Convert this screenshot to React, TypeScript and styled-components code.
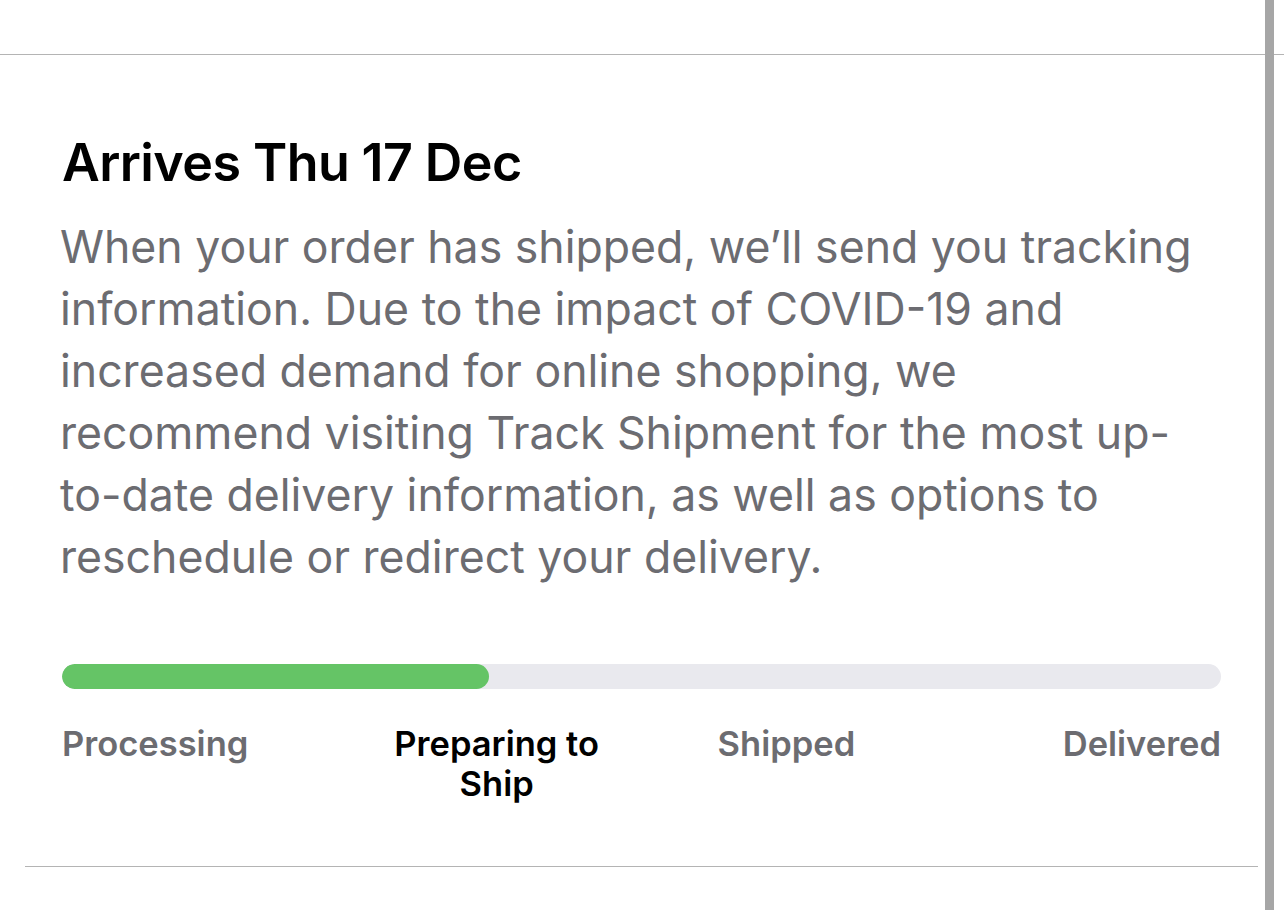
import React from 'react';
import styled, { createGlobalStyle } from 'styled-components';

const GlobalStyle = createGlobalStyle`
  html, body {
    margin: 0;
    padding: 0;
    background: #fff;
  }
  body {
    font-family: Inter, "Noto Sans", "Liberation Sans", sans-serif;
    -webkit-font-smoothing: antialiased;
  }
`;

const STEPS = [
  { label: 'Processing', align: 'left', active: false },
  { label: 'Preparing to Ship', align: 'center', active: true },
  { label: 'Shipped', align: 'center', active: false },
  { label: 'Delivered', align: 'right', active: false },
];

const PROGRESS = 36.8;

const Page = styled.div`
  position: relative;
  width: 1284px;
  height: 910px;
  overflow: hidden;
  background: #fff;
`;

const TopRule = styled.div`
  height: 54px;
  border-bottom: 1px solid #b4b4b4;
`;

const Section = styled.section`
  display: flex;
  flex-direction: column;
  padding: 0 63px 0 62px;
  width: 1159px;
`;

const Title = styled.h2`
  margin: 78px 0 0;
  font-size: 52px;
  line-height: 60px;
  font-weight: 600;
  letter-spacing: -0.6px;
  color: #000;
`;

const Body = styled.p`
  margin: 23px 0 0 -2px;
  font-size: 44.6px;
  line-height: 62px;
  font-weight: 400;
  color: #6c6c71;
`;

const Track = styled.div`
  margin-top: 76px;
  height: 25px;
  border-radius: 13px;
  background: #e9e9ee;
  overflow: hidden;
`;

const Fill = styled.div`
  height: 100%;
  border-radius: 13px;
  background: #65c466;
`;

const Steps = styled.div`
  display: grid;
  grid-template-columns: repeat(4, 1fr);
  margin-top: 35px;
  height: 142px;
`;

const Step = styled.div<{ $align: string; $active: boolean }>`
  text-align: ${p => p.$align};
  font-size: 34.5px;
  line-height: 40px;
  font-weight: 600;
  color: ${p => (p.$active ? '#000' : '#6c6c71')};
  padding: 0 40px;
  &:first-child { padding-left: 0; }
  &:last-child { padding-right: 0; }
`;

const BottomRule = styled.div`
  margin-left: 25px;
  width: 1233px;
  border-top: 1px solid #b4b4b4;
`;

const Scrollbar = styled.div`
  position: absolute;
  top: 0;
  bottom: 0;
  left: 1265px;
  width: 9px;
  background: #a6a6a6;
`;

export default function App() {
  return (
    <Page>
      <GlobalStyle />
      <TopRule />
      <Section>
        <Title>Arrives Thu 17 Dec</Title>
        <Body>
          When your order has shipped, we’ll send you tracking information. Due to the impact of
          COVID-19 and increased demand for online shopping, we recommend visiting Track Shipment
          for the most up-to-date delivery information, as well as options to reschedule or
          redirect your delivery.
        </Body>
        <Track>
          <Fill style={{ width: `${PROGRESS}%` }} />
        </Track>
        <Steps>
          {STEPS.map(s => (
            <Step key={s.label} $align={s.align} $active={s.active}>
              {s.label}
            </Step>
          ))}
        </Steps>
      </Section>
      <BottomRule />
      <Scrollbar />
    </Page>
  );
}
